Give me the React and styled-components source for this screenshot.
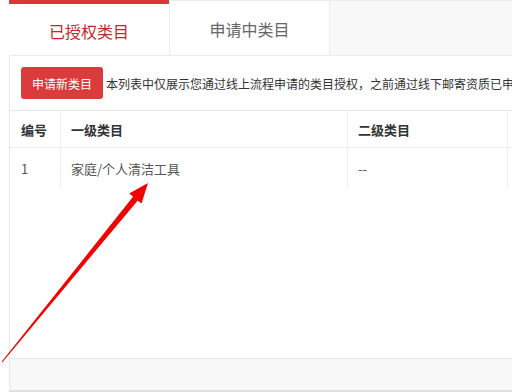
import React from "react";
import styled, { createGlobalStyle } from "styled-components";

const Global = createGlobalStyle`
  html, body { margin: 0; padding: 0; background: #fff; overflow: hidden; }
  body { font-family: "Noto Sans CJK SC", "Microsoft YaHei", sans-serif; }
  * { box-sizing: border-box; }
`;

const Page = styled.div`
  position: relative;
  width: 512px;
  height: 392px;
  overflow: hidden;
  padding-left: 9px;
  background: #fff;
`;

const Panel = styled.div`
  width: 1000px;
  height: 392px;
  display: flex;
  flex-direction: column;
`;

const TabBar = styled.div`
  height: 56px;
  display: flex;
  background: #f8f8f8;
  border-top: 1px solid #ececec;
  border-bottom: 1px solid #ececec;
`;

const Tab = styled.div`
  width: ${(p) => p.$w}px;
  margin-top: ${(p) => (p.$active ? -1 : 0)}px;
  display: flex;
  align-items: center;
  justify-content: center;
  background: #fff;
  font-size: 16px;
  padding-top: 2px;
  color: ${(p) => (p.$active ? "#c02a2a" : "#666")};
  border-top: ${(p) => (p.$active ? "4px solid #d6393a" : "none")};
  border-left: ${(p) => (p.$active ? "none" : "1px solid #ececec")};
  border-right: ${(p) => (p.$active ? "none" : "1px solid #ececec")};
`;

const Body = styled.div`
  flex: 1;
  display: flex;
  flex-direction: column;
  border-left: 1px solid #e6e6e6;
`;

const Content = styled.div`
  flex: 1;
  background: #fff;
`;

const Toolbar = styled.div`
  display: flex;
  align-items: center;
  gap: 3px;
  padding: 11px 0 11px 11px;
  white-space: nowrap;
`;

const Button = styled.button`
  height: 32px;
  padding: 0 11px;
  border: none;
  border-radius: 3px;
  background: #dc3b3b;
  color: #fff;
  font-family: inherit;
  font-size: 12px;
  cursor: pointer;
`;

const Note = styled.span`
  font-size: 12px;
  color: #333;
`;

const Row = styled.div`
  display: grid;
  grid-template-columns: 51px 287px 160px 1fr;
  height: ${(p) => p.$h}px;
  border-top: ${(p) => (p.$head ? "1px solid #e8e8e8" : "none")};
  border-bottom: ${(p) => (p.$head ? "1px solid #eeeeee" : "none")};
`;

const Cell = styled.div`
  display: flex;
  align-items: center;
  padding-left: ${(p) => p.$pl || 10}px;
  font-size: 13px;
  color: ${(p) => (p.$head ? "#333" : "#555")};
  font-weight: ${(p) => (p.$head ? 700 : 400)};
  border-right: 1px solid #efefef;
  white-space: nowrap;
`;

const Footer = styled.div`
  height: 34px;
  background: #f8f8f8;
  border-top: 1px solid #e8e8e8;
  border-bottom: 2px solid #e0e0e0;
`;

const Overlay = styled.svg`
  position: absolute;
  left: 0;
  top: 0;
  pointer-events: none;
`;

export default function App() {
  return (
    <Page>
      <Global />
      <Panel>
        <TabBar>
          <Tab $active $w={160}>已授权类目</Tab>
          <Tab $w={161}>申请中类目</Tab>
        </TabBar>
        <Body>
          <Content>
            <Toolbar>
              <Button>申请新类目</Button>
              <Note>
                本列表中仅展示您通过线上流程申请的类目授权，之前通过线下邮寄资质已申请的类目授权请在类目管理中查看
              </Note>
            </Toolbar>
            <Row $head $h={38}>
              <Cell $head $pl={11}>编号</Cell>
              <Cell $head>一级类目</Cell>
              <Cell $head>二级类目</Cell>
              <Cell $head></Cell>
            </Row>
            <Row $h={40}>
              <Cell $pl={11}>1</Cell>
              <Cell>家庭/个人清洁工具</Cell>
              <Cell>--</Cell>
              <Cell></Cell>
            </Row>
          </Content>
          <Footer />
        </Body>
      </Panel>
      <Overlay width="512" height="392" viewBox="0 0 512 392">
        <polygon
          points="148,183 141.5,203.5 137.8,200.4 2.2,362.4 1.6,361.8 133.2,196.6 129.2,193.6"
          fill="#f40000"
        />
      </Overlay>
    </Page>
  );
}
